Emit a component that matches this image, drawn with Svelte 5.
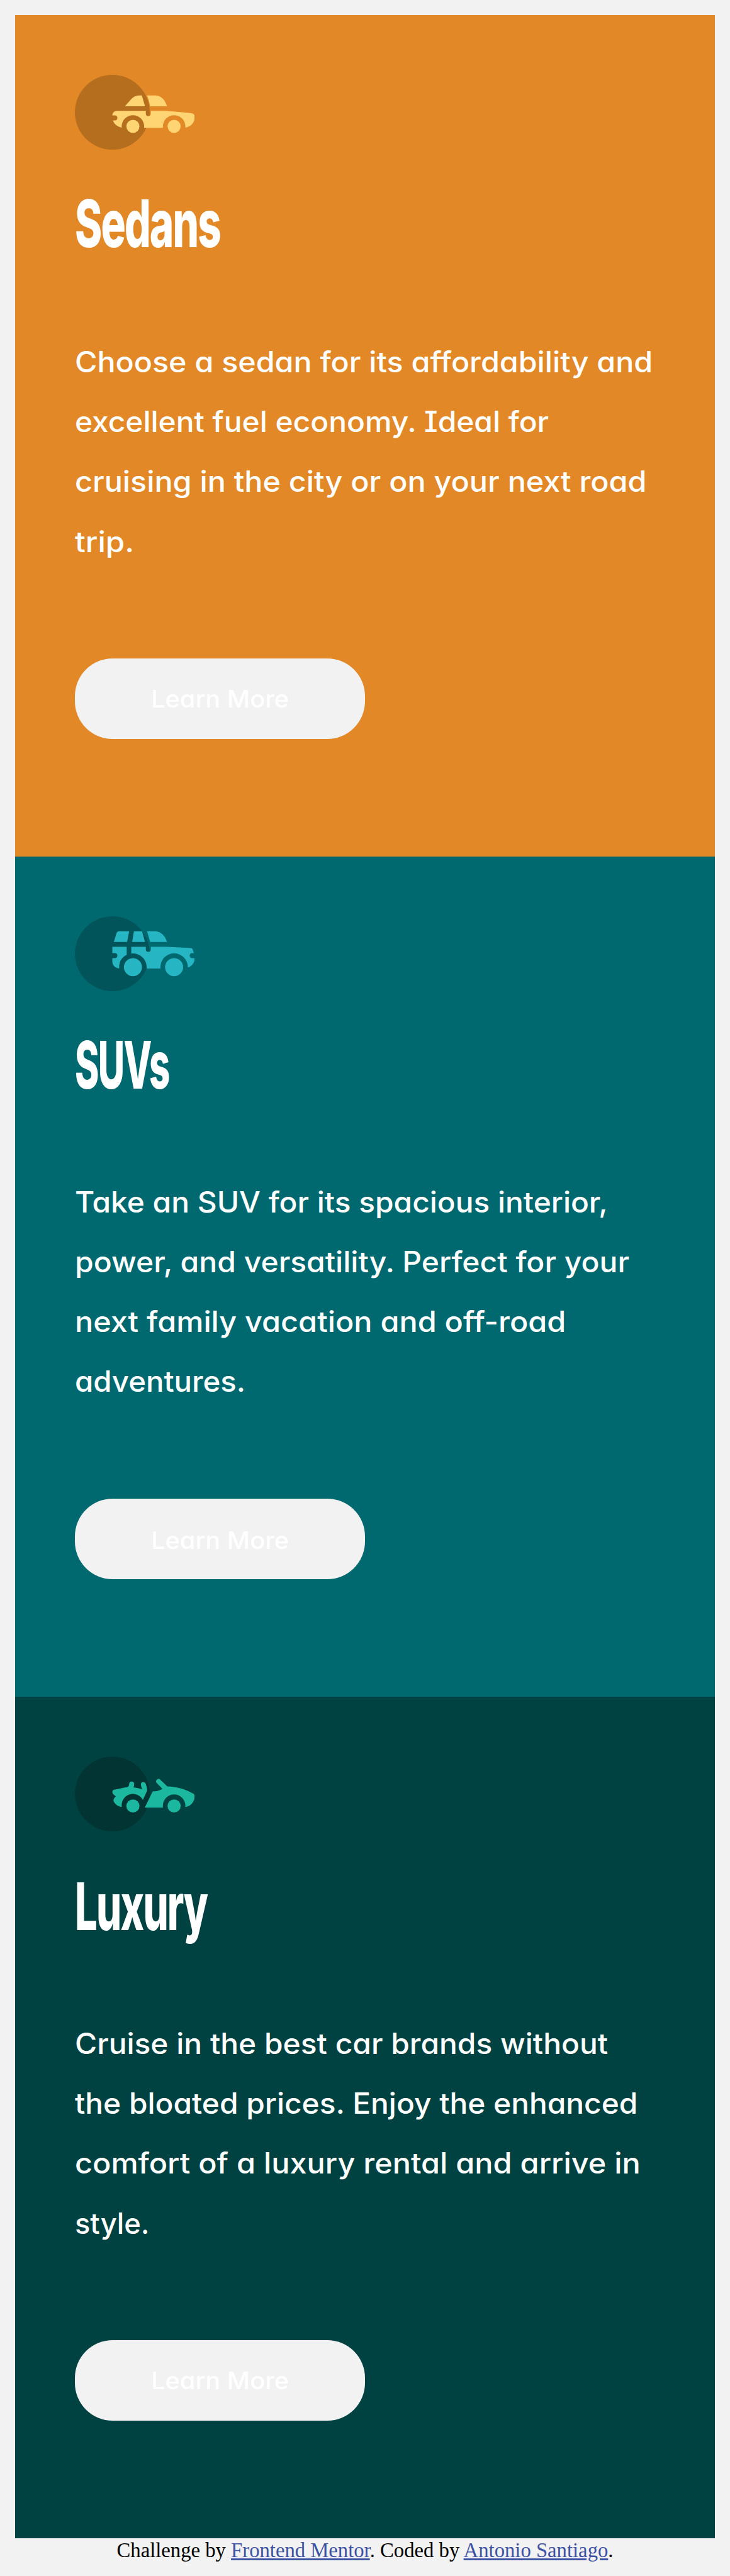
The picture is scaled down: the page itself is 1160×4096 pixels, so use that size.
<script>
  const K = 1160 / 1170;

  // Each text line carries the width it is set to; the glyphs are condensed or expanded to reach it.
  const cards = [
    {
      kind: 'sedans',
      title: ['Sedans', 233],
      lines: [
        ['Choose a sedan for its affordability and', 926],
        ['excellent fuel economy. Ideal for', 760],
        ['cruising in the city or on your next road', 916],
        ['trip.', 95]
      ]
    },
    {
      kind: 'suvs',
      title: ['SUVs', 151],
      lines: [
        ['Take an SUV for its spacious interior,', 854],
        ['power, and versatility. Perfect for your', 889],
        ['next family vacation and off-road', 787],
        ['adventures.', 273]
      ]
    },
    {
      kind: 'luxury',
      title: ['Luxury', 212],
      lines: [
        ['Cruise in the best car brands without', 854],
        ['the bloated prices. Enjoy the enhanced', 902],
        ['comfort of a luxury rental and arrive in', 906],
        ['style.', 120]
      ]
    }
  ];

  function fit(node, width) {
    const apply = () => {
      node.style.transform = `scaleX(${(width * K) / node.offsetWidth})`;
    };
    apply();
    document.fonts?.ready.then(apply);
  }
</script>

<main>
  {#each cards as card}
    <section class={card.kind}>
      {#if card.kind === 'sedans'}
        <svg class="icon" viewBox="60 60 576 360">
          <circle cx="240" cy="240" r="180" fill="#b56d1e" />
          <g fill="#ffd473">
            <path d="M300 211Q315 195 327 181Q345 159 369 159H382L397 211ZM406 159H446C476 160 494 181 503 211H421Q417 180 406 159Z" />
            <path d="M260 233H401V246A12 12 0 0 0 425 246V233H500L617 244Q636 246 636 262C636 289 619 309 591 314V308A54 54 0 0 0 483 308V315H393V308A54 54 0 0 0 285 308V314C265 309 249 298 243 279H252A12 12 0 0 0 252 255H240V251Q243 236 260 233Z" />
            <circle cx="339" cy="307.500" r="31.500" /><circle cx="537" cy="307.500" r="31.500" />
          </g>
        </svg>
      {:else if card.kind === 'suvs'}
        <svg class="icon" viewBox="60 60 576 360">
          <circle cx="240" cy="240" r="180" fill="#015459" />
          <g fill="#26b5c2">
            <path d="M247 183L259 145Q262 132 274 132H321L311 183ZM344 132H383L397 183H335ZM407 132H445C475 133 494 154 503 183H422Z" />
            <path d="M240 207H309V245Q273 263 273 304V310C254 309 240 296 240 276V261H252A12 12 0 0 0 252 237H240ZM331 207H401V219A12 12 0 0 0 425 219V207H503L615 212Q625 213 627 221L632 237H624A12 12 0 0 0 624 261H636C636 283 622 302 603 306A66 67 0 0 0 471 304V311H405V304A66 66 0 0 0 331 239Z" />
            <circle cx="339" cy="304.500" r="43.500" /><circle cx="537" cy="304.500" r="43.500" />
          </g>
        </svg>
      {:else}
        <svg class="icon" viewBox="60 51 576 360">
          <circle cx="240" cy="231" r="180" fill="#013433" />
          <g fill="#1bb89f">
            <path d="M253 210L315 197Q321 192 321 183A12 12 0 0 1 345 183Q345 192 342 199Q364 202 384 208Q377 194 377 183A12 12 0 0 1 400 181Q408 202 407 216L387 260A54 54 0 0 0 285 287V294C263 290 248 276 245 261Q247 250 257 242Q240 232 240 221Q241 211 253 210Z" />
            <path d="M434 219Q459 219 481 207L454 179A11.500 11.500 0 0 1 471 163L504 195C550 196 593 208 631 231Q636 235 636 240C636 268 618 290 591 294V287A54 54 0 0 0 483 287V297H396Z" />
            <circle cx="339" cy="289" r="31.500" /><circle cx="537" cy="289" r="31.500" />
          </g>
        </svg>
      {/if}
      <h1><span use:fit={card.title[1]}>{card.title[0]}</span></h1>
      <p>
        {#each card.lines as [text, width]}
          <span class="line"><span use:fit={width}>{text}</span></span>
        {/each}
      </p>
      <button><span use:fit={221}>Learn More</span></button>
    </section>
  {/each}
  <footer>
    <span>Challenge by <a href="#mentor">Frontend Mentor</a>. Coded by <a href="#author">Antonio Santiago</a>.</span>
  </footer>
</main>

<style>
  :global(body) {
    margin: 0;
    background: #f2f2f2;
  }
  main {
    box-sizing: border-box;
    height: 4096px;
    padding: 24px 24px 0;
    overflow: hidden;
  }
  section {
    box-sizing: border-box;
    display: flex;
    flex-direction: column;
    align-items: flex-start;
    height: 1338px;
    padding: 95px 95px 0;
    color: #fff;
    font-family: Inter, 'Liberation Sans', sans-serif;
    font-feature-settings: 'cv11' 1, 'cv08' 1, 'calt' 0;
  }
  .sedans { background: #e38826; }
  .suvs { background: #006970; height: 1336px; }
  .luxury { background: #004241; }
  .icon {
    display: block;
    width: 190.400px;
    height: 119px;
  }
  h1 {
    margin: 46.500px 0 0;
    font-size: 105px;
    font-weight: 800;
    line-height: 140px;
    height: 140px;
    letter-spacing: -3px;
    font-feature-settings: normal;
  }
  span {
    white-space: nowrap;
  }
  h1 span,
  .line span,
  button span {
    display: inline-block;
    transform-origin: 0 50%;
  }
  p {
    margin: 103.500px 0 0;
    font-size: 46px;
    font-weight: 450;
    line-height: 95.200px;
  }
  .suvs p { margin-top: 101px; }
  .luxury h1 { margin-top: 49px; }
  .luxury p { margin-top: 101px; }
  .line {
    display: block;
  }
  button {
    box-sizing: border-box;
    display: flex;
    align-items: center;
    width: 461px;
    height: 128px;
    margin-top: 138.200px;
    padding: 0 0 1px 121px;
    border: 0;
    border-radius: 60px;
    background: #f2f2f2;
    color: #fff;
    font-family: inherit;
    font-feature-settings: inherit;
    font-size: 38.300px;
    font-weight: 450;
  }
  .suvs button { padding: 4.500px 0 0 121px; }
  footer {
    text-align: center;
    font-family: 'Liberation Serif', serif;
    font-size: 32.700px;
    line-height: 38px;
    color: #000;
  }
  a {
    color: #3e52a3;
  }
</style>
